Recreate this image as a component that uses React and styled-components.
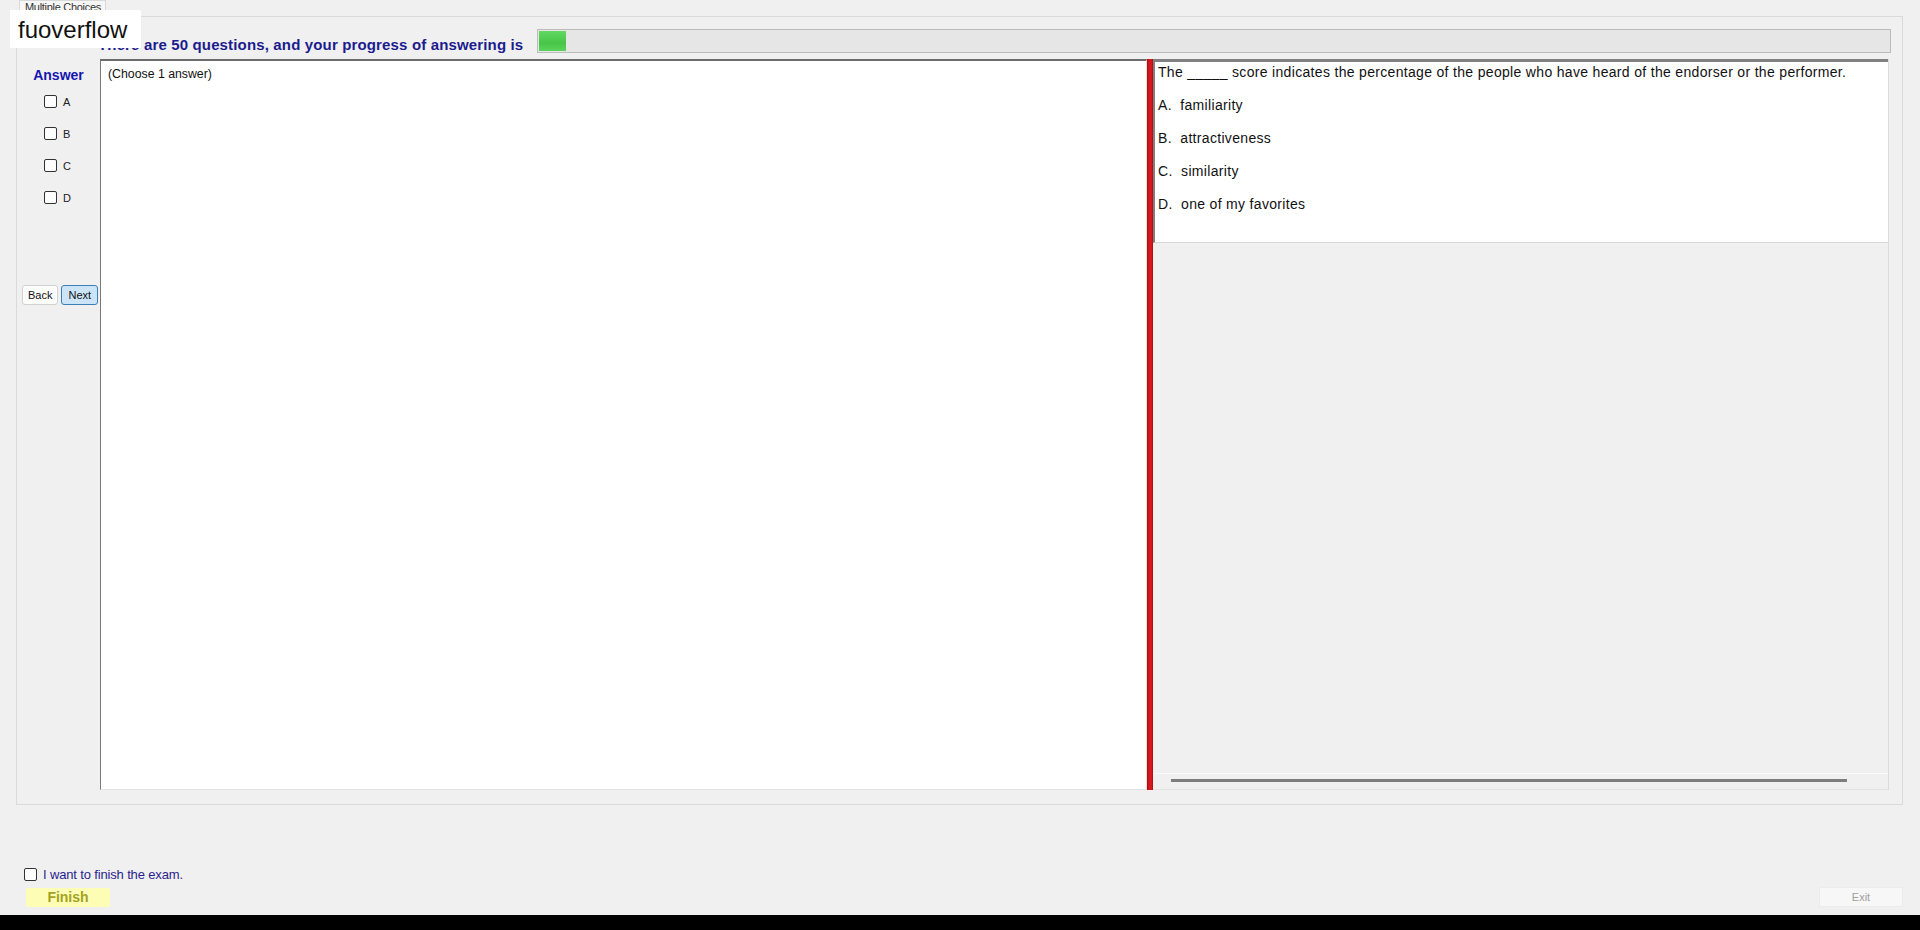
import React from 'react';
import styled, { createGlobalStyle } from 'styled-components';

const GlobalStyle = createGlobalStyle`
  html, body {
    margin: 0;
    padding: 0;
    background: #f0f0f0;
  }
  body {
    font-family: "Liberation Sans", Arial, sans-serif;
  }
`;

const choices = ['A', 'B', 'C', 'D'];

const question = {
  text: 'The _____ score indicates the percentage of the people who have heard of the endorser or the performer.',
  options: [
    { letter: 'A', text: 'familiarity' },
    { letter: 'B', text: 'attractiveness' },
    { letter: 'C', text: 'similarity' },
    { letter: 'D', text: 'one of my favorites' },
  ],
};

const App = () => {
  return (
    <Screen>
      <GlobalStyle />
      <Watermark>fuoverflow</Watermark>

      <TabStrip>
        <Tab>Multiple Choices</Tab>
      </TabStrip>

      <TabPanel>
        <HeaderRow>
          <Heading>There are 50 questions, and your progress of answering is</Heading>
          <Progress>
            <ProgressFill style={{ width: `${(1 / 50) * 100}%` }} />
          </Progress>
        </HeaderRow>

        <Body>
          <AnswerColumn>
            <AnswerTitle>Answer</AnswerTitle>
            <ChoiceList>
              {choices.map((c) => (
                <Choice key={c}>
                  <Box />
                  <ChoiceLabel>{c}</ChoiceLabel>
                </Choice>
              ))}
            </ChoiceList>
            <NavRow>
              <NavButton>Back</NavButton>
              <NavButton primary>Next</NavButton>
            </NavRow>
          </AnswerColumn>

          <AnswerBox>(Choose 1 answer)</AnswerBox>

          <Splitter />

          <QuestionColumn>
            <QuestionBox>
              <QuestionLine>{question.text}</QuestionLine>
              {question.options.map((o) => (
                <QuestionLine key={o.letter}>{`${o.letter}.  ${o.text}`}</QuestionLine>
              ))}
            </QuestionBox>
            <QuestionRest />
            <ScrollStrip>
              <ScrollTrack />
            </ScrollStrip>
          </QuestionColumn>
        </Body>
      </TabPanel>

      <BottomBar>
        <FinishGroup>
          <FinishCheck>
            <Box />
            <FinishText>I want to finish the exam.</FinishText>
          </FinishCheck>
          <FinishButton>Finish</FinishButton>
        </FinishGroup>
        <ExitButton>Exit</ExitButton>
      </BottomBar>

      <Taskbar />
    </Screen>
  );
};

export default App;

const Screen = styled.div`
  position: relative;
  width: 1920px;
  height: 930px;
  display: flex;
  flex-direction: column;
  background: #f0f0f0;
  overflow: hidden;
`;

const Watermark = styled.div`
  position: absolute;
  left: 10px;
  top: 10px;
  width: 131px;
  height: 38px;
  box-sizing: border-box;
  padding: 1px 0 0 8px;
  background: #fff;
  font-size: 24px;
  line-height: 38px;
  color: #111;
  z-index: 5;
`;

const TabStrip = styled.div`
  height: 16px;
  padding-left: 19px;
  display: flex;
  align-items: flex-end;
`;

const Tab = styled.div`
  height: 17px;
  box-sizing: border-box;
  padding: 0 4px 0 5px;
  border: 1px solid #d9d9d9;
  border-bottom: none;
  background: #f7f7f7;
  font-size: 11px;
  letter-spacing: -0.3px;
  line-height: 13px;
  color: #333;
  margin-bottom: -1px;
  position: relative;
  z-index: 1;
`;

const TabPanel = styled.div`
  margin-left: 16px;
  width: 1887px;
  height: 789px;
  box-sizing: border-box;
  border: 1px solid #dadada;
  padding-bottom: 14px;
  display: flex;
  flex-direction: column;
`;

const HeaderRow = styled.div`
  height: 42px;
  display: flex;
  align-items: flex-start;
  padding: 0 11px 0 81px;
`;

const Heading = styled.div`
  margin-top: 19px;
  font-size: 15px;
  letter-spacing: 0.15px;
  font-weight: bold;
  color: #1c1c8e;
  white-space: nowrap;
`;

const Progress = styled.div`
  flex: 1;
  margin-top: 12px;
  margin-left: 14px;
  height: 24px;
  box-sizing: border-box;
  border: 1px solid #bcbcbc;
  background: #e6e6e6;
  padding: 1px;
`;

const ProgressFill = styled.div`
  height: 100%;
  background: linear-gradient(#62d862, #48c548 60%, #5bd35b);
`;

const Body = styled.div`
  flex: 1;
  display: flex;
  min-height: 0;
`;

const AnswerColumn = styled.div`
  width: 83px;
  display: flex;
  flex-direction: column;
`;

const AnswerTitle = styled.div`
  margin-top: 8px;
  text-align: center;
  font-size: 14px;
  font-weight: bold;
  color: #1515b0;
`;

const ChoiceList = styled.div`
  margin-top: 12px;
  padding-left: 27px;
  display: flex;
  flex-direction: column;
  gap: 19px;
`;

const Choice = styled.div`
  display: flex;
  align-items: center;
  height: 13px;
`;

const Box = styled.span`
  display: inline-block;
  width: 13px;
  height: 13px;
  box-sizing: border-box;
  border: 1px solid #333;
  border-radius: 2px;
  background: #fff;
  flex-shrink: 0;
`;

const ChoiceLabel = styled.span`
  margin-left: 6px;
  font-size: 11px;
  color: #222;
`;

const NavRow = styled.div`
  margin-top: 81px;
  padding-left: 5px;
  display: flex;
  gap: 3px;
`;

const NavButton = styled.button`
  height: 20px;
  padding: 0 ${(p) => (p.primary ? '6px' : '5px')};
  box-sizing: border-box;
  font-family: "Liberation Sans", Arial, sans-serif;
  font-size: 11px;
  color: #111;
  border-radius: 3px;
  border: 1px solid ${(p) => (p.primary ? '#3d7fb4' : '#d2d2d2')};
  background: ${(p) => (p.primary ? '#cce4f7' : '#fdfdfd')};
`;

const AnswerBox = styled.div`
  width: 1047px;
  box-sizing: border-box;
  background: #fff;
  border-top: 2px solid #6b6b6b;
  border-left: 1px solid #7a7a7a;
  border-right: 1px solid #e3e3e3;
  border-bottom: 1px solid #e3e3e3;
  padding: 6px 7px;
  font-size: 12.3px;
  color: #111;
`;

const Splitter = styled.div`
  width: 6px;
  background: linear-gradient(90deg, #a80c12, #d8161e 40%, #d8161e 80%, #9a0c10);
`;

const QuestionColumn = styled.div`
  width: 736px;
  display: flex;
  flex-direction: column;
  border-right: 1px solid #dcdcdc;
  box-sizing: border-box;
`;

const QuestionBox = styled.div`
  height: 184px;
  box-sizing: border-box;
  background: #fff;
  border-top: 3px solid #808080;
  border-left: 2px solid #808080;
  border-bottom: 1px solid #d8d8d8;
  padding: 2px 0 0 3px;
  display: flex;
  flex-direction: column;
  gap: 17px;
`;

const QuestionLine = styled.div`
  font-size: 14px;
  letter-spacing: 0.32px;
  line-height: 16px;
  color: #111;
  white-space: pre;
`;

const QuestionRest = styled.div`
  flex: 1;
`;

const ScrollStrip = styled.div`
  height: 17px;
  box-sizing: border-box;
  border-top: 1px solid #fafafa;
  border-bottom: 1px solid #e2e2e2;
  padding: 5px 41px 0 18px;
`;

const ScrollTrack = styled.div`
  height: 3px;
  background: #7d7d7d;
`;

const BottomBar = styled.div`
  height: 110px;
  box-sizing: border-box;
  padding: 0 17px 8px 24px;
  display: flex;
  align-items: flex-end;
  justify-content: space-between;
`;

const FinishGroup = styled.div`
  display: flex;
  flex-direction: column;
  gap: 7px;
`;

const FinishCheck = styled.div`
  display: flex;
  align-items: center;
  gap: 6px;
  height: 13px;
`;

const FinishText = styled.span`
  font-size: 13px;
  letter-spacing: -0.15px;
  color: #2b1f8c;
`;

const FinishButton = styled.div`
  margin-left: 2px;
  width: 84px;
  height: 19px;
  background: #fdfdb5;
  border-radius: 2px;
  font-size: 14px;
  font-weight: bold;
  color: #a3a322;
  text-align: center;
  line-height: 19px;
`;

const ExitButton = styled.div`
  width: 84px;
  height: 20px;
  box-sizing: border-box;
  border: 1px solid #ececec;
  background: #f7f7f7;
  font-size: 11px;
  color: #a0a0a0;
  text-align: center;
  line-height: 18px;
`;

const Taskbar = styled.div`
  height: 15px;
  background: #000;
`;
